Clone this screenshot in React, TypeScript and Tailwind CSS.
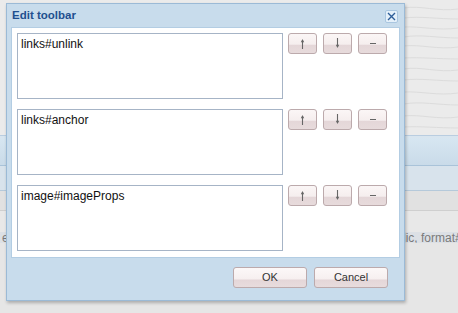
const FONT = { fontFamily: '"Liberation Sans", Arial, sans-serif' };

const ROWS = ["links#unlink", "links#anchor", "image#imageProps"];

function ToolButton({ children }: { children: React.ReactNode }) {
  return (
    <button className="flex h-[21px] w-[29px] items-center justify-center rounded-[3px] border border-[#bcaaac] bg-[linear-gradient(#fbf6f6_0%,#f5eeee_55%,#e4d6d8_56%,#e7dbdc_100%)] text-[#555]">
      {children}
    </button>
  );
}

function UpIcon() {
  return (
    <svg width="7" height="11" viewBox="0 0 7 11" fill="none">
      <path d="M3.5 2v9" stroke="#666" strokeWidth="1.1" />
      <path d="M1.8 4.2L3.5 1 5.2 4.2z" fill="#666" />
    </svg>
  );
}

function DownIcon() {
  return (
    <svg width="7" height="11" viewBox="0 0 7 11" fill="none">
      <path d="M3.5 0v9" stroke="#666" strokeWidth="1.1" />
      <path d="M1.8 6.8L3.5 10 5.2 6.8z" fill="#666" />
    </svg>
  );
}

function MinusIcon() {
  return <span className="block h-[1.5px] w-[6px] bg-[#666]" />;
}

function FooterButton({ label }: { label: string }) {
  return (
    <button
      style={FONT}
      className="h-[21px] w-[74px] rounded-[3px] border border-[#bcaaac] bg-[linear-gradient(#fcf8f8_0%,#f6efef_60%,#e4d6d8_61%,#e8dcdd_100%)] text-[11px] text-[#333]"
    >
      {label}
    </button>
  );
}

function Background() {
  return (
    <div className="flex h-full w-full flex-col bg-[#e8e8e8]">
      <div className="relative h-[135px] bg-[#ebebeb]">
        <svg className="absolute inset-0" width="458" height="135" viewBox="0 0 458 135" fill="none">
          {[8, 18, 27, 37, 46, 58, 69, 80, 92, 104, 116, 127].map((y, i) => (
            <path
              key={y}
              d={`M404 ${y} C 420 ${y - 3 + (i % 3)}, 438 ${y + 4 - (i % 2) * 3}, 458 ${y + 1}`}
              stroke="#dcdcdc"
              strokeWidth="1"
            />
          ))}
        </svg>
      </div>
      <div className="h-[3px] border-t border-[#b9cde0] bg-[#d8e5ef]" />
      <div className="h-[28px] border-b border-[#a9c3d9] bg-[linear-gradient(#d7e6f1,#c9dbe9)]" />
      <div className="h-[25px] border-b border-[#b5c9da] bg-[#d8e3ec]" />
      <div className="h-[20px] border-b border-[#cfcfcf] bg-[#e1e1e1]" />
      <div className="h-[21px] bg-[#e8e8e8]" />
      <div
        style={FONT}
        className="flex h-[11px] items-center overflow-hidden whitespace-nowrap bg-[#dce0e5] pl-[2px] text-[12px] leading-none text-[#7a7a7a]"
      >
        <span className="w-[401px] shrink-0">e</span>
        <span className="shrink-0">lic, format#</span>
      </div>
      <div className="flex-1 bg-[#e6e6e6]" />
    </div>
  );
}

export default function App() {
  return (
    <div className="relative h-[313px] w-[458px] overflow-hidden">
      <Background />

      <div className="absolute left-[6px] top-[3px] flex h-[298px] w-[399px] flex-col border border-[#9bbad6] bg-[#c8dcec] shadow-[1px_2px_3px_rgba(0,0,0,0.25)]">
        <div className="flex h-[23px] items-center justify-between pl-[5px] pr-[6px]">
          <span
            style={FONT}
            className="text-[11.5px] font-bold text-[#1f4f8f]"
          >
            Edit toolbar
          </span>
          <button className="mt-[1px] flex h-[13px] w-[13px] items-center justify-center rounded-[2px] border border-[#a9c6e0] bg-[#e4f0fa]">
            <svg width="9" height="9" viewBox="0 0 9 9" fill="none">
              <path d="M1 1l7 7M8 1L1 8" stroke="#2d5d98" strokeWidth="1.4" />
            </svg>
          </button>
        </div>

        <div className="mx-[4px] flex h-[231px] flex-col gap-[10px] border border-[#b3cde3] bg-white px-[5px] pt-[5px]">
          {ROWS.map((row) => (
            <div key={row} className="flex gap-[5px]">
              <div
                style={FONT}
                className="h-[66px] w-[266px] border border-[#a6b4c6] px-[3px] pt-[3px] text-[12px] leading-[14px] text-[#111]"
              >
                {row}
              </div>
              <div className="flex gap-[6px]">
                <ToolButton>
                  <UpIcon />
                </ToolButton>
                <ToolButton>
                  <DownIcon />
                </ToolButton>
                <ToolButton>
                  <MinusIcon />
                </ToolButton>
              </div>
            </div>
          ))}
        </div>

        <div className="flex flex-1 items-start justify-end gap-[7px] pr-[16px] pt-[9px]">
          <FooterButton label="OK" />
          <FooterButton label="Cancel" />
        </div>
      </div>
    </div>
  );
}
